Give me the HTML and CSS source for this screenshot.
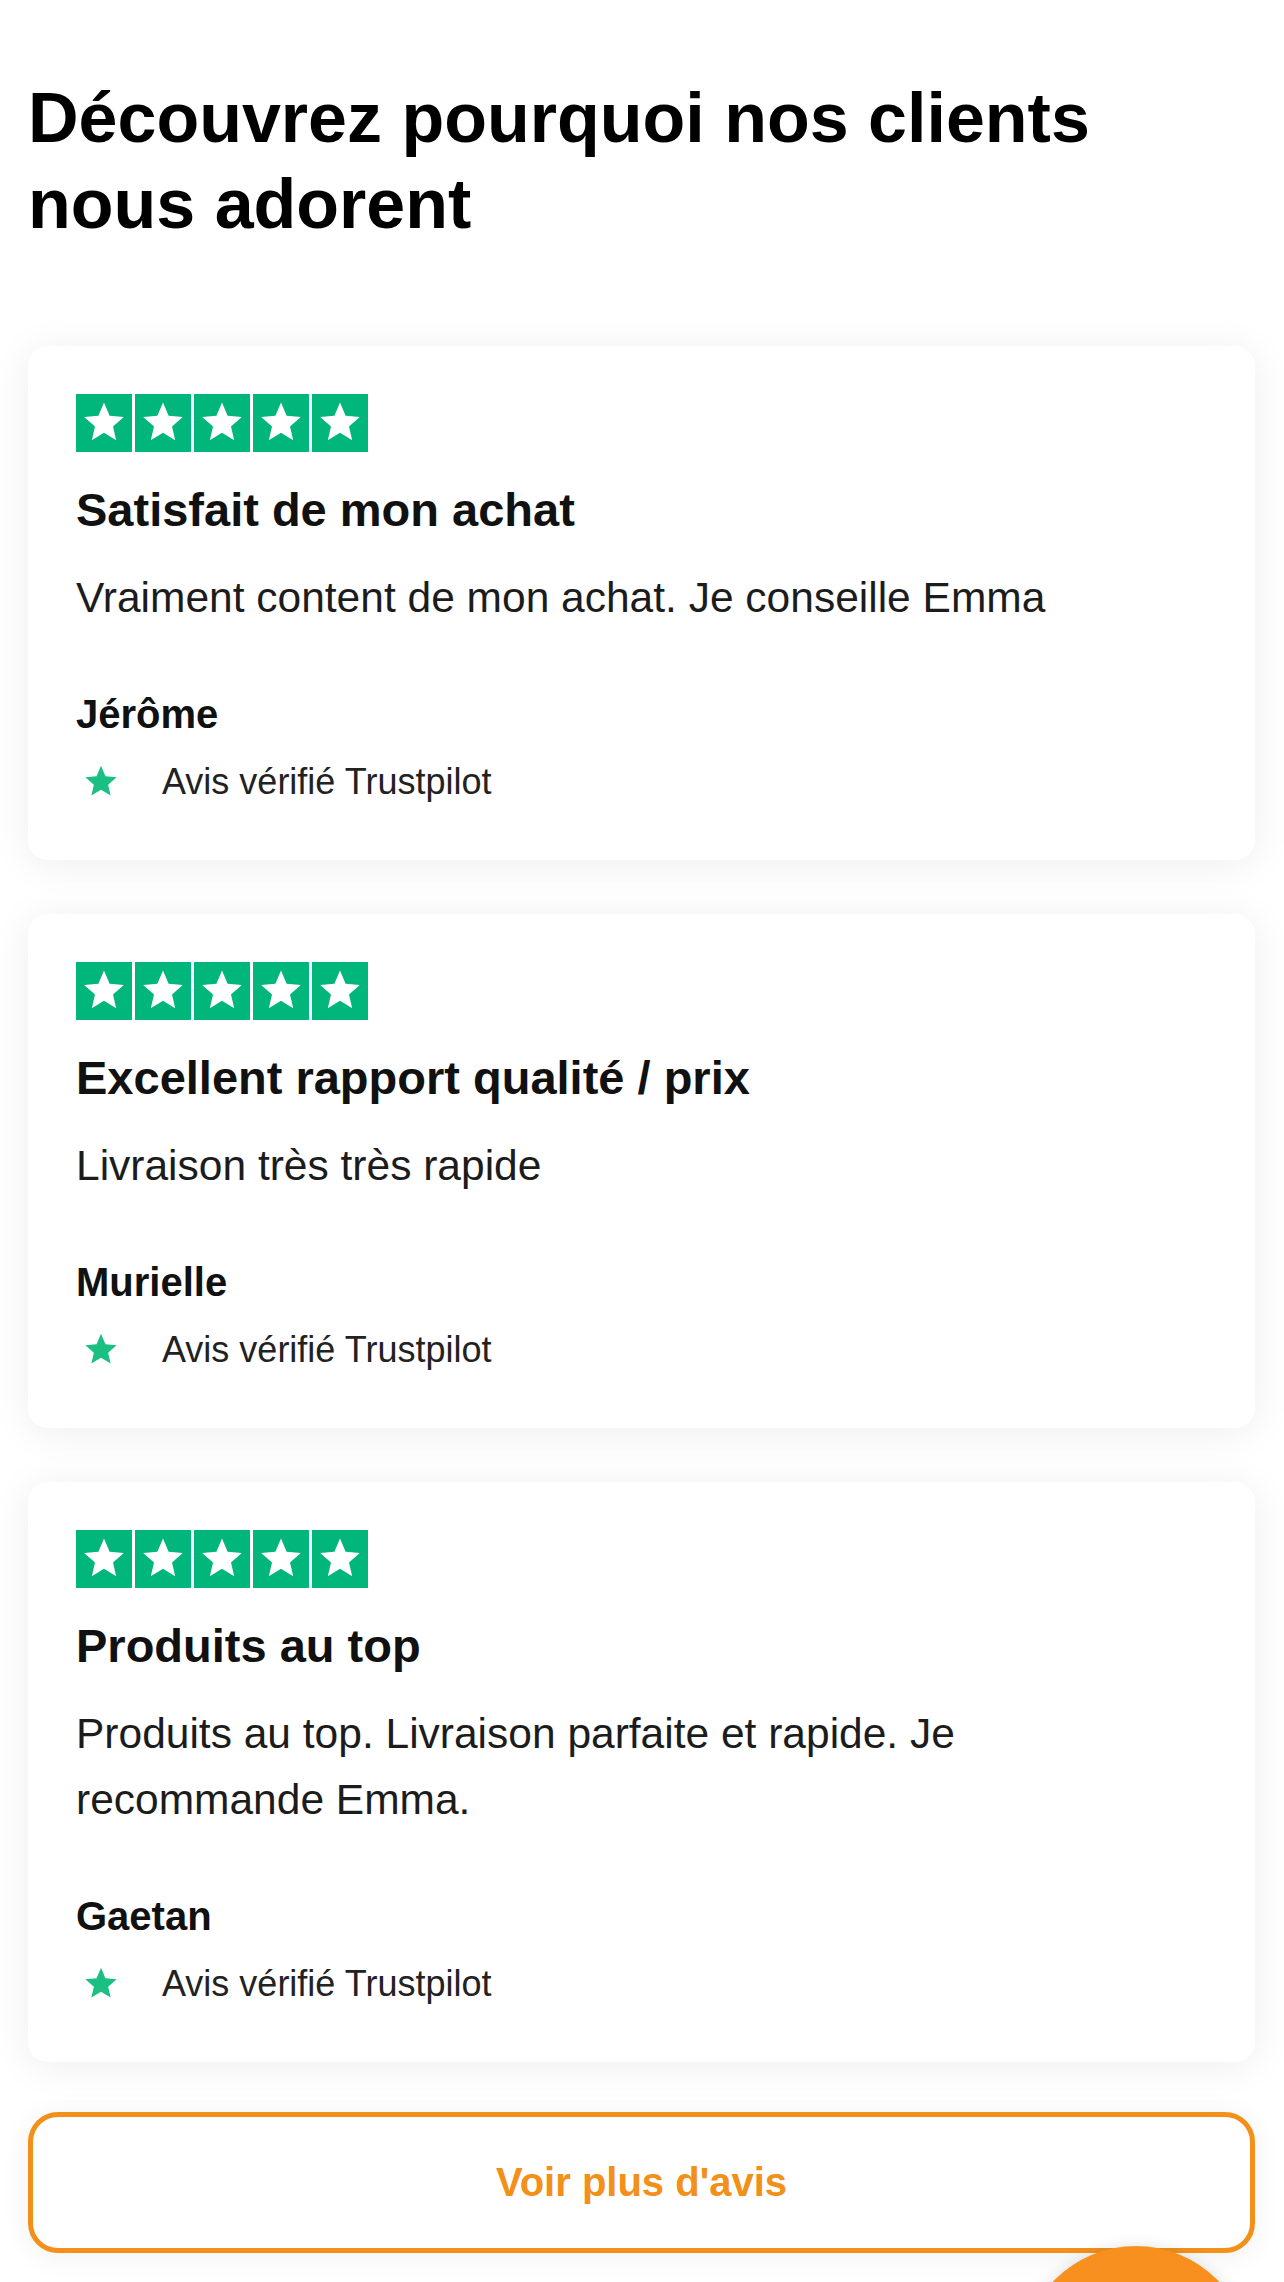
FILE: index.html
```html
<!DOCTYPE html>
<html lang="fr">
<head>
    <meta charset="UTF-8">
    <meta name="viewport" content="width=device-width, initial-scale=1.0">
    <title>Avis clients - Emma</title>
    <link rel="stylesheet" href="styles.css">
</head>
<body>
    <section class="reviews">
        <h1>Découvrez pourquoi nos clients nous adorent</h1>

        <div class="card">
            <div class="stars">
                <span class="star-box"><svg viewBox="0 0 24 24"><polygon points="12,1.8 14.8,8.4 21.9,9 16.5,13.7 18.1,20.6 12,16.9 5.9,20.6 7.5,13.7 2.1,9 9.2,8.4" /></svg></span>
                <span class="star-box"><svg viewBox="0 0 24 24"><polygon points="12,1.8 14.8,8.4 21.9,9 16.5,13.7 18.1,20.6 12,16.9 5.9,20.6 7.5,13.7 2.1,9 9.2,8.4" /></svg></span>
                <span class="star-box"><svg viewBox="0 0 24 24"><polygon points="12,1.8 14.8,8.4 21.9,9 16.5,13.7 18.1,20.6 12,16.9 5.9,20.6 7.5,13.7 2.1,9 9.2,8.4" /></svg></span>
                <span class="star-box"><svg viewBox="0 0 24 24"><polygon points="12,1.8 14.8,8.4 21.9,9 16.5,13.7 18.1,20.6 12,16.9 5.9,20.6 7.5,13.7 2.1,9 9.2,8.4" /></svg></span>
                <span class="star-box"><svg viewBox="0 0 24 24"><polygon points="12,1.8 14.8,8.4 21.9,9 16.5,13.7 18.1,20.6 12,16.9 5.9,20.6 7.5,13.7 2.1,9 9.2,8.4" /></svg></span>
            </div>
            <h2 class="review-title">Satisfait de mon achat</h2>
            <p class="review-text">Vraiment content de mon achat. Je conseille Emma</p>
            <p class="review-author">Jérôme</p>
            <div class="verified">
                <svg class="verified-icon" viewBox="0 0 24 24"><polygon points="12,1.8 14.8,8.4 21.9,9 16.5,13.7 18.1,20.6 12,16.9 5.9,20.6 7.5,13.7 2.1,9 9.2,8.4" /></svg>
                <span>Avis vérifié Trustpilot</span>
            </div>
        </div>

        <div class="card">
            <div class="stars">
                <span class="star-box"><svg viewBox="0 0 24 24"><polygon points="12,1.8 14.8,8.4 21.9,9 16.5,13.7 18.1,20.6 12,16.9 5.9,20.6 7.5,13.7 2.1,9 9.2,8.4" /></svg></span>
                <span class="star-box"><svg viewBox="0 0 24 24"><polygon points="12,1.8 14.8,8.4 21.9,9 16.5,13.7 18.1,20.6 12,16.9 5.9,20.6 7.5,13.7 2.1,9 9.2,8.4" /></svg></span>
                <span class="star-box"><svg viewBox="0 0 24 24"><polygon points="12,1.8 14.8,8.4 21.9,9 16.5,13.7 18.1,20.6 12,16.9 5.9,20.6 7.5,13.7 2.1,9 9.2,8.4" /></svg></span>
                <span class="star-box"><svg viewBox="0 0 24 24"><polygon points="12,1.8 14.8,8.4 21.9,9 16.5,13.7 18.1,20.6 12,16.9 5.9,20.6 7.5,13.7 2.1,9 9.2,8.4" /></svg></span>
                <span class="star-box"><svg viewBox="0 0 24 24"><polygon points="12,1.8 14.8,8.4 21.9,9 16.5,13.7 18.1,20.6 12,16.9 5.9,20.6 7.5,13.7 2.1,9 9.2,8.4" /></svg></span>
            </div>
            <h2 class="review-title">Excellent rapport qualité / prix</h2>
            <p class="review-text">Livraison très très rapide</p>
            <p class="review-author">Murielle</p>
            <div class="verified">
                <svg class="verified-icon" viewBox="0 0 24 24"><polygon points="12,1.8 14.8,8.4 21.9,9 16.5,13.7 18.1,20.6 12,16.9 5.9,20.6 7.5,13.7 2.1,9 9.2,8.4" /></svg>
                <span>Avis vérifié Trustpilot</span>
            </div>
        </div>

        <div class="card">
            <div class="stars">
                <span class="star-box"><svg viewBox="0 0 24 24"><polygon points="12,1.8 14.8,8.4 21.9,9 16.5,13.7 18.1,20.6 12,16.9 5.9,20.6 7.5,13.7 2.1,9 9.2,8.4" /></svg></span>
                <span class="star-box"><svg viewBox="0 0 24 24"><polygon points="12,1.8 14.8,8.4 21.9,9 16.5,13.7 18.1,20.6 12,16.9 5.9,20.6 7.5,13.7 2.1,9 9.2,8.4" /></svg></span>
                <span class="star-box"><svg viewBox="0 0 24 24"><polygon points="12,1.8 14.8,8.4 21.9,9 16.5,13.7 18.1,20.6 12,16.9 5.9,20.6 7.5,13.7 2.1,9 9.2,8.4" /></svg></span>
                <span class="star-box"><svg viewBox="0 0 24 24"><polygon points="12,1.8 14.8,8.4 21.9,9 16.5,13.7 18.1,20.6 12,16.9 5.9,20.6 7.5,13.7 2.1,9 9.2,8.4" /></svg></span>
                <span class="star-box"><svg viewBox="0 0 24 24"><polygon points="12,1.8 14.8,8.4 21.9,9 16.5,13.7 18.1,20.6 12,16.9 5.9,20.6 7.5,13.7 2.1,9 9.2,8.4" /></svg></span>
            </div>
            <h2 class="review-title">Produits au top</h2>
            <p class="review-text">Produits au top. Livraison parfaite et rapide. Je recommande Emma.</p>
            <p class="review-author">Gaetan</p>
            <div class="verified">
                <svg class="verified-icon" viewBox="0 0 24 24"><polygon points="12,1.8 14.8,8.4 21.9,9 16.5,13.7 18.1,20.6 12,16.9 5.9,20.6 7.5,13.7 2.1,9 9.2,8.4" /></svg>
                <span>Avis vérifié Trustpilot</span>
            </div>
        </div>

        <a href="#" class="more-button">Voir plus d'avis</a>
    </section>

    <div class="chat-bubble"></div>
</body>
</html>
```

FILE: styles.css
```css
body {
    font-family: "Liberation Sans", Arial, sans-serif;
    margin: 0;
    padding: 0;
    background-color: #ffffff;
    color: #111111;
}
.reviews {
    display: flex;
    flex-direction: column;
    padding: 75px 29px 40px 28px;
}
h1 {
    font-size: 70px;
    line-height: 86px;
    font-weight: 700;
    color: #000000;
    margin: 0 0 99px;
    max-width: 1100px;
}
.card {
    background-color: #ffffff;
    border-radius: 20px;
    padding: 48px 56px 55px 48px;
    margin-bottom: 54px;
    box-shadow: 0 4px 40px rgba(0, 0, 0, 0.07);
}
.stars {
    display: flex;
    gap: 3px;
}
.star-box {
    width: 56px;
    height: 58px;
    background-color: #00b67a;
    display: flex;
    align-items: center;
    justify-content: center;
}
.star-box svg {
    width: 48px;
    height: 48px;
    fill: #ffffff;
}
.review-title {
    font-size: 47px;
    line-height: 56px;
    font-weight: 700;
    color: #111111;
    margin: 30px 0 0;
}
.review-text {
    font-size: 42.5px;
    line-height: 66px;
    color: #1c1c1c;
    margin: 27px 0 0;
}
.review-author {
    font-size: 40px;
    line-height: 48px;
    font-weight: 700;
    color: #111111;
    margin: 59px 0 0;
}
.verified {
    display: flex;
    align-items: center;
    gap: 42px;
    padding-left: 6px;
    margin-top: 20px;
    font-size: 36px;
    line-height: 47px;
    color: #222222;
}
.verified-icon {
    width: 38px;
    height: 38px;
    fill: #1cbf82;
}
.more-button {
    display: flex;
    align-items: center;
    justify-content: center;
    height: 131px;
    margin-top: -4px;
    border: 5px solid #f39019;
    border-radius: 30px;
    background-color: #ffffff;
    color: #f39019;
    font-size: 40px;
    font-weight: 700;
    text-decoration: none;
    box-shadow: 0 4px 30px rgba(0, 0, 0, 0.06);
}
.chat-bubble {
    position: fixed;
    right: 33px;
    bottom: -194px;
    width: 230px;
    height: 230px;
    border-radius: 50%;
    background-color: #f7901e;
    box-shadow: 0 2px 16px rgba(0, 0, 0, 0.15);
}
```
